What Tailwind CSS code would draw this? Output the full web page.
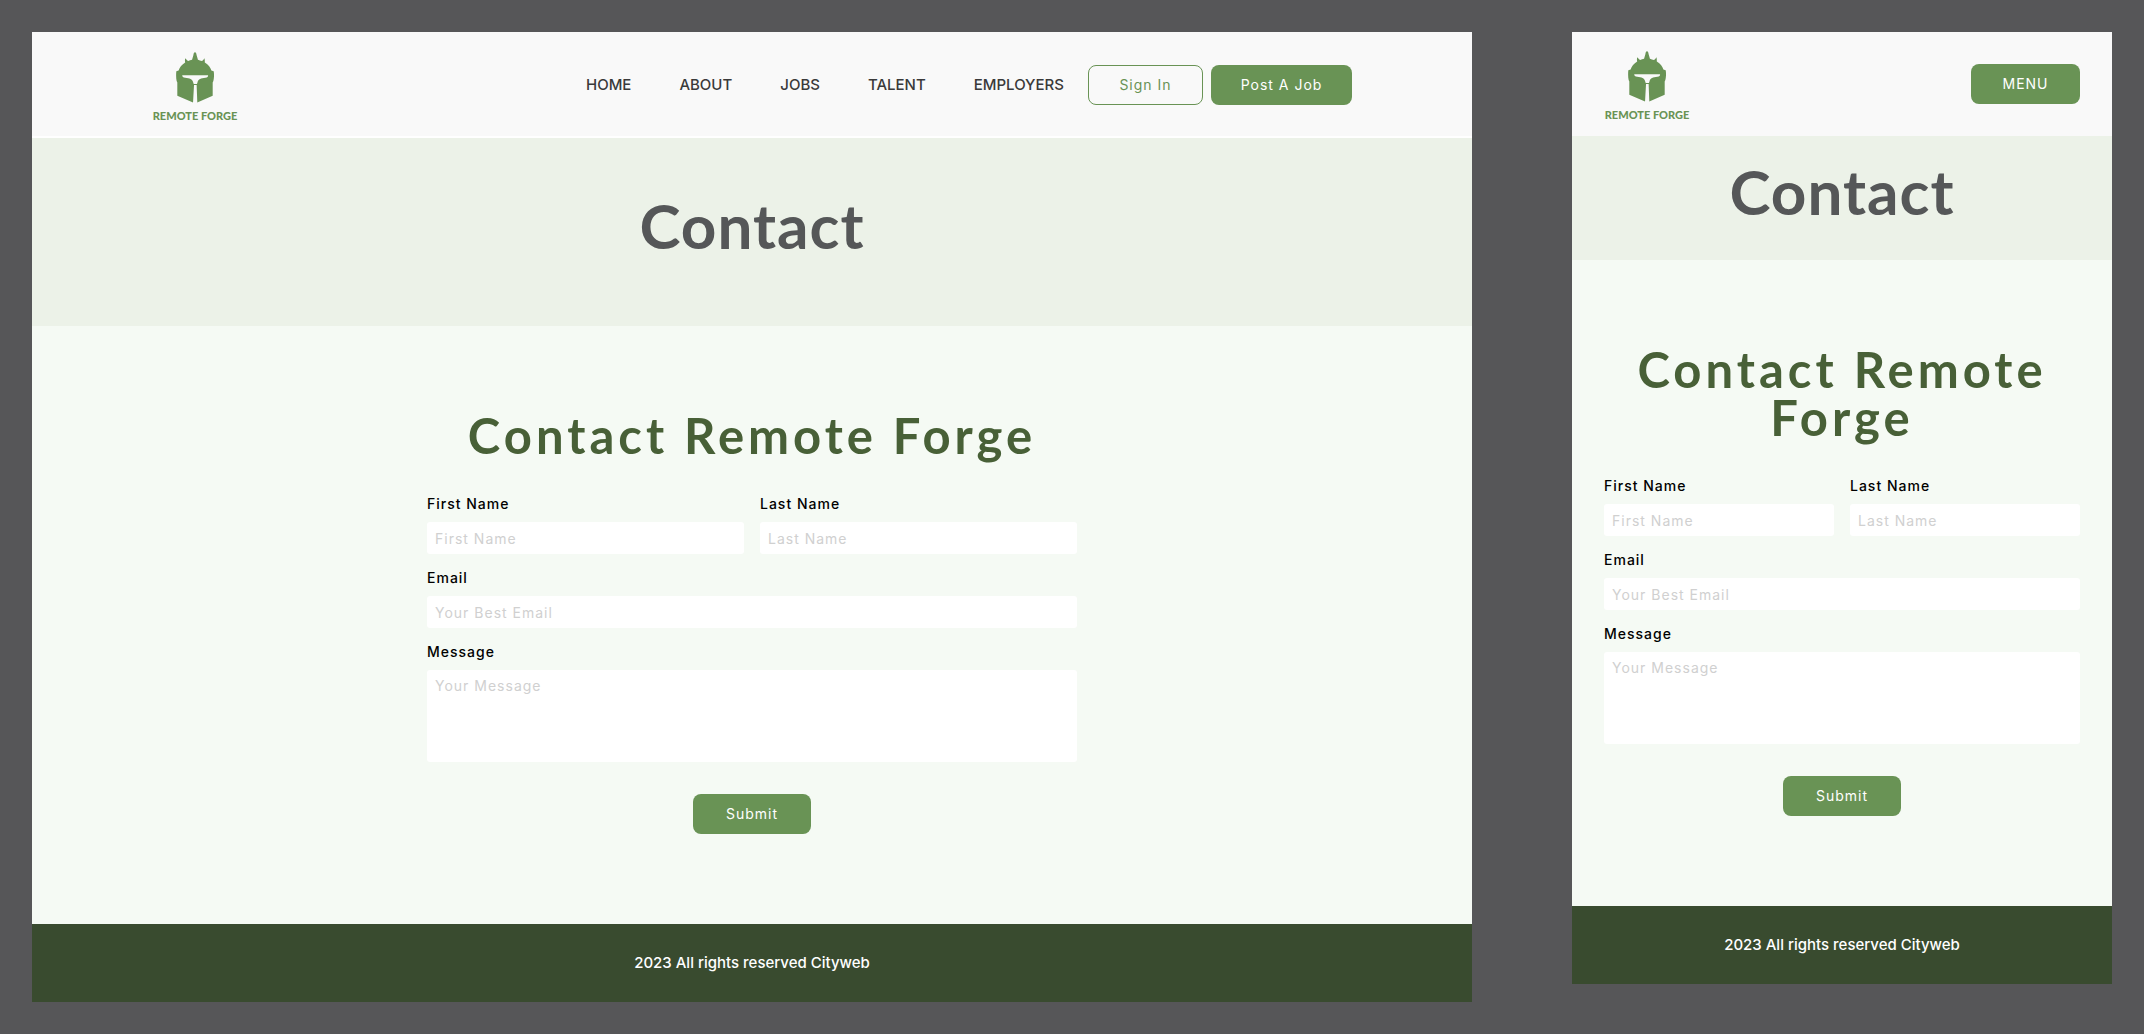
<!DOCTYPE html>
<html lang="en">
<head>
<meta charset="utf-8">
<meta name="viewport" content="width=device-width, initial-scale=1">
<title>Contact | Remote Forge</title>
<script src="https://cdn.jsdelivr.net/npm/@tailwindcss/browser@4"></script>
</head>
<body class="min-h-screen bg-[#565658] font-['Inter',sans-serif]">
<svg class="hidden" aria-hidden="true">
  <symbol id="helmet" viewBox="0 0 116 154">
    <path fill="#699355" fill-rule="evenodd" d="M58 0C61 0 62 4 63 9L67 23C71 24 75 26 79 27C83 24 85 21 87 18C88 23 88 27 88 31C99 38 106 47 108 56L115 58C117 68 116 80 114 88L112 92V133L65 153L63 100H55L52 153L4 133V92L2 88C0 80 0 68 1 58L8 56C11 46 18 37 28 31C27 26 27 22 28 18C31 21 34 25 37 27C41 25 45 24 49 23L53 9C54 4 55 0 58 0ZM19 70C19 75 22 77 28 78C42 79 50 82 52 91L54 97H64L66 91C68 82 76 79 90 78C96 77 98 75 98 70Z"/>
  </symbol>
</svg>
<div class="flex items-start gap-[100px] p-8">

  <div class="min-w-0 flex-1">
    <header class="border-b-2 border-white bg-[#f9f9f9] pt-0.5">
      <div class="mx-auto flex h-[102px] max-w-[1200px] items-center justify-between">
        <a href="#" class="flex w-[86px] flex-col items-center gap-2 whitespace-nowrap pt-0.5">
          <svg class="h-[51px] w-[38px]" aria-hidden="true"><use href="#helmet"/></svg>
          <span class="font-['Lato',sans-serif] text-[11px] font-black leading-[10px] text-[#699355]">REMOTE FORGE</span>
        </a>
        <div class="flex items-center gap-2">
          <nav class="flex text-[15px] font-medium text-[#3a3a3a]">
            <a href="#" class="px-6">HOME</a>
            <a href="#" class="px-6">ABOUT</a>
            <a href="#" class="px-6">JOBS</a>
            <a href="#" class="px-6">TALENT</a>
            <a href="#" class="pl-6 pr-4">EMPLOYERS</a>
          </nav>
          <button type="button" class="h-10 w-[115px] rounded-lg border border-[#699355] text-sm tracking-[1px] text-[#699355]">Sign In</button>
          <button type="button" class="h-10 w-[141px] rounded-lg bg-[#699355] text-sm tracking-[1px] text-white">Post A Job</button>
        </div>
      </div>
    </header>
    <section class="bg-[#ecf2e8] pt-[55px] pb-[69px] text-center">
      <h1 class="font-['Lato',sans-serif] text-[62px] font-bold leading-16 tracking-[1px] text-[#555758]">Contact</h1>
    </section>
    <main class="bg-[#f5faf4] px-8 pt-[85px] pb-[90px]">
      <h2 class="mb-[37px] text-center font-['Lato',sans-serif] text-[49px] font-bold leading-12 tracking-[4px] text-[#486037]">Contact Remote Forge</h2>
      <form class="mx-auto grid max-w-[650px] grid-cols-2 gap-4 text-sm leading-4 tracking-[1px] text-black">
        <div class="grid gap-2.5">
          <label for="d-first" class="font-medium">First Name</label>
          <input id="d-first" type="text" placeholder="First Name" class="h-8 w-full rounded-[3px] bg-white px-2 placeholder:text-[#d0d0d0]">
        </div>
        <div class="grid gap-2.5">
          <label for="d-last" class="font-medium">Last Name</label>
          <input id="d-last" type="text" placeholder="Last Name" class="h-8 w-full rounded-[3px] bg-white px-2 placeholder:text-[#d0d0d0]">
        </div>
        <div class="col-span-2 grid gap-2.5">
          <label for="d-email" class="font-medium">Email</label>
          <input id="d-email" type="email" placeholder="Your Best Email" class="h-8 w-full rounded-[3px] bg-white px-2 placeholder:text-[#d0d0d0]">
        </div>
        <div class="col-span-2 grid gap-2.5">
          <label for="d-message" class="font-medium">Message</label>
          <textarea id="d-message" placeholder="Your Message" class="h-[92px] w-full resize-none rounded-[3px] bg-white p-2 placeholder:text-[#d0d0d0]"></textarea>
        </div>
        <button type="submit" class="col-span-2 mt-4 h-10 w-[118px] justify-self-center rounded-lg bg-[#699355] tracking-[1px] text-white">Submit</button>
      </form>
    </main>
    <footer class="bg-[#394b2f] py-[27px] text-center text-[15px] font-medium leading-6 text-white">2023 All rights reserved Cityweb</footer>
  </div>

  <div class="w-[540px] shrink-0">
    <header class="flex h-[104px] items-center justify-between bg-[#f9f9f9] px-8">
      <a href="#" class="flex w-[86px] flex-col items-center gap-2 whitespace-nowrap pt-0.5">
        <svg class="h-[51px] w-[38px]" aria-hidden="true"><use href="#helmet"/></svg>
        <span class="font-['Lato',sans-serif] text-[11px] font-black leading-[10px] text-[#699355]">REMOTE FORGE</span>
      </a>
      <button type="button" class="h-10 w-[109px] rounded-lg bg-[#699355] text-sm tracking-[1px] text-white">MENU</button>
    </header>
    <section class="bg-[#ecf2e8] pt-[23px] pb-[37px] text-center">
      <h1 class="font-['Lato',sans-serif] text-[62px] font-bold leading-16 tracking-[1px] text-[#555758]">Contact</h1>
    </section>
    <main class="bg-[#f5faf4] px-8 pt-[85px] pb-[90px]">
      <h2 class="mb-[37px] text-center font-['Lato',sans-serif] text-[49px] font-bold leading-12 tracking-[4px] text-[#486037]">Contact Remote Forge</h2>
      <form class="grid grid-cols-2 gap-4 text-sm leading-4 tracking-[1px] text-black">
        <div class="grid gap-2.5">
          <label for="m-first" class="font-medium">First Name</label>
          <input id="m-first" type="text" placeholder="First Name" class="h-8 w-full rounded-[3px] bg-white px-2 placeholder:text-[#d0d0d0]">
        </div>
        <div class="grid gap-2.5">
          <label for="m-last" class="font-medium">Last Name</label>
          <input id="m-last" type="text" placeholder="Last Name" class="h-8 w-full rounded-[3px] bg-white px-2 placeholder:text-[#d0d0d0]">
        </div>
        <div class="col-span-2 grid gap-2.5">
          <label for="m-email" class="font-medium">Email</label>
          <input id="m-email" type="email" placeholder="Your Best Email" class="h-8 w-full rounded-[3px] bg-white px-2 placeholder:text-[#d0d0d0]">
        </div>
        <div class="col-span-2 grid gap-2.5">
          <label for="m-message" class="font-medium">Message</label>
          <textarea id="m-message" placeholder="Your Message" class="h-[92px] w-full resize-none rounded-[3px] bg-white p-2 placeholder:text-[#d0d0d0]"></textarea>
        </div>
        <button type="submit" class="col-span-2 mt-4 h-10 w-[118px] justify-self-center rounded-lg bg-[#699355] tracking-[1px] text-white">Submit</button>
      </form>
    </main>
    <footer class="bg-[#394b2f] py-[27px] text-center text-[15px] font-medium leading-6 text-white">2023 All rights reserved Cityweb</footer>
  </div>

</div>
</body>
</html>
